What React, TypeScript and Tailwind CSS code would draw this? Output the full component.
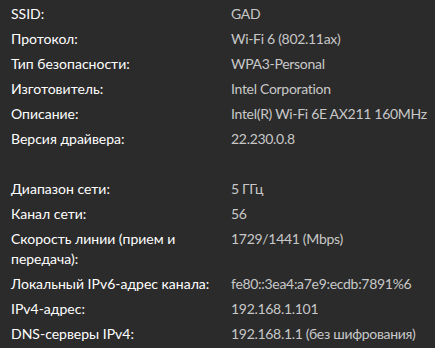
import React from "react";

type Row = { label: string; value: string } | null;

const rows: Row[] = [
  { label: "SSID:", value: "GAD" },
  { label: "Протокол:", value: "Wi-Fi 6 (802.11ax)" },
  { label: "Тип безопасности:", value: "WPA3-Personal" },
  { label: "Изготовитель:", value: "Intel Corporation" },
  { label: "Описание:", value: "Intel(R) Wi-Fi 6E AX211 160MHz" },
  { label: "Версия драйвера:", value: "22.230.0.8" },
  null,
  { label: "Диапазон сети:", value: "5 ГГц" },
  { label: "Канал сети:", value: "56" },
  { label: "Скорость линии (прием и передача):", value: "1729/1441 (Mbps)" },
  { label: "Локальный IPv6-адрес канала:", value: "fe80::3ea4:a7e9:ecdb:7891%6" },
  { label: "IPv4-адрес:", value: "192.168.1.101" },
  { label: "DNS-серверы IPv4:", value: "192.168.1.1 (без шифрования)" },
];

const App: React.FC = () => {
  return (
    <div
      className="w-[435px] h-[348px] bg-[#2b2b2b] overflow-hidden pt-[4px] pl-[11px]"
      style={{ fontFamily: "Lato, sans-serif" }}
    >
      <div className="grid grid-cols-[204px_1fr] gap-x-[16px] gap-y-[5px] text-[14px] leading-5">
        {rows.map((row, i) =>
          row ? (
            <React.Fragment key={i}>
              <div className="text-white">{row.label}</div>
              <div className="text-[#c8c8c8] whitespace-nowrap tracking-[-0.3px]">{row.value}</div>
            </React.Fragment>
          ) : (
            <div key={i} className="col-span-2 h-5" />
          )
        )}
      </div>
    </div>
  );
};

export default App;
